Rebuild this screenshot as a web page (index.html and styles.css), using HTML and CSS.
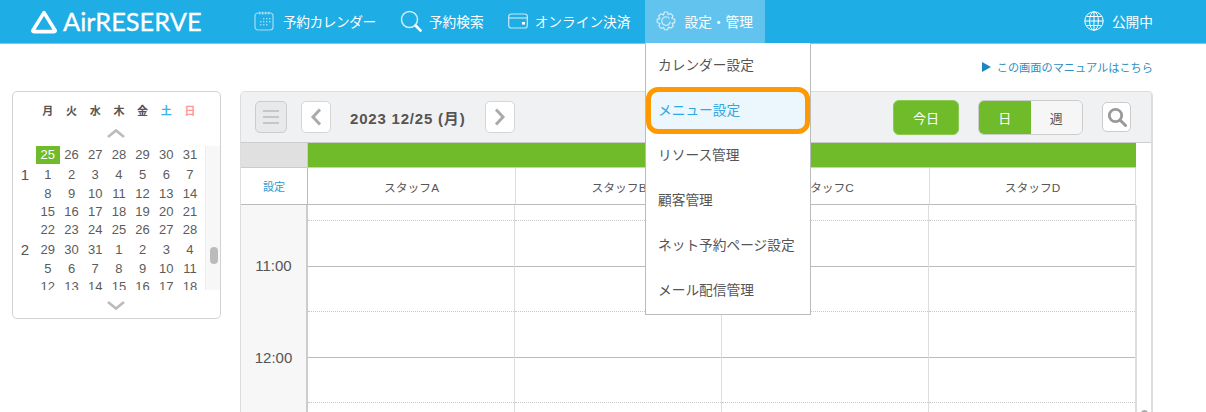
FILE: index.html
```html
<!DOCTYPE html>
<html lang="ja">
<head>
<meta charset="utf-8">
<title>AirRESERVE</title>
<link rel="stylesheet" href="styles.css">
</head>
<body>
<header class="topbar">
  <a class="logo">
    <svg class="logo-mark" viewBox="0 0 26 24" width="26" height="24"><path d="M13 2.6 L24 20.2 Q24.6 21.6 23 21.6 L3 21.6 Q1.4 21.6 2 20.2 Z" fill="none" stroke="#fff" stroke-width="3.6" stroke-linejoin="round"/></svg>
    <span class="logo-text">AirRESERVE</span>
  </a>
  <nav class="nav">
    <a class="nav-item nav-item-first">
      <svg class="nav-icon" viewBox="0 0 20 20" width="20" height="20"><rect x="1" y="2" width="18" height="17" rx="3" fill="none" stroke="#a5dcf4" stroke-width="1.2"/><g fill="#a5dcf4"><rect x="5" y="0.8" width="1.4" height="2.6"/><rect x="8" y="0.8" width="1.4" height="2.6"/><rect x="11" y="0.8" width="1.4" height="2.6"/><rect x="14" y="0.8" width="1.4" height="2.6"/><rect x="9" y="7" width="1.4" height="1.4"/><rect x="12" y="7" width="1.4" height="1.4"/><rect x="15" y="7" width="1.4" height="1.4"/><rect x="6" y="10" width="1.4" height="1.4"/><rect x="9" y="10" width="1.4" height="1.4"/><rect x="12" y="10" width="1.4" height="1.4"/><rect x="15" y="10" width="1.4" height="1.4"/><rect x="6" y="13" width="1.4" height="1.4"/><rect x="9" y="13" width="1.4" height="1.4"/><rect x="12" y="13" width="1.4" height="1.4"/></g></svg>
      <span class="nav-label-narrow">予約カレンダー</span>
    </a>
    <a class="nav-item nav-item-tight">
      <svg class="nav-icon nav-icon-search" viewBox="0 0 22 22" width="22" height="22"><circle cx="9.5" cy="9.5" r="8" fill="none" stroke="#d3eefa" stroke-width="1.5"/><path d="M15.5 15.5 L20.5 20.5" stroke="#fff" stroke-width="2.6" stroke-linecap="round"/></svg>
      <span>予約検索</span>
    </a>
    <a class="nav-item nav-item-pay">
      <svg class="nav-icon" viewBox="0 0 20 16" width="20" height="16"><rect x="0.7" y="1" width="18.6" height="14" rx="2.5" fill="none" stroke="#c6e9f9" stroke-width="1.2"/><path d="M1 5 H19" stroke="#c6e9f9" stroke-width="1.2"/><rect x="14" y="9" width="3" height="2.6" fill="#fff"/></svg>
      <span>オンライン決済</span>
    </a>
    <a class="nav-item nav-item-active">
      <svg class="nav-icon" viewBox="0 0 20 20" width="20" height="20"><path d="M8.4 1 H11.6 L12.2 3.6 L14.6 2.4 L17 4.8 L15.8 7.2 L18.8 8.2 V11.6 L16.2 12.4 L17.4 15 L15 17.2 L12.6 16 L11.6 18.8 H8.4 L7.6 16.2 L5 17.4 L2.8 15 L4 12.6 L1.2 11.6 V8.4 L3.8 7.6 L2.6 5 L5 2.8 L7.4 4 Z" fill="none" stroke="#d8f0fb" stroke-width="1.1" stroke-linejoin="round"/><path d="M13.4 7.4 A4.3 4.3 0 1 0 14.3 10.6" fill="none" stroke="#d8f0fb" stroke-width="1.1"/></svg>
      <span>設定・管理</span>
    </a>
  </nav>
  <a class="status">
    <svg class="nav-icon" viewBox="0 0 20 20" width="20" height="20"><g fill="none" stroke="#fff" stroke-width="1"><circle cx="10" cy="10" r="9.2"/><ellipse cx="10" cy="10" rx="4.4" ry="9.2"/><path d="M10 .8 V19.2 M.8 10 H19.2 M2.2 5.5 H17.8 M2.2 14.5 H17.8"/></g></svg>
    <span>公開中</span>
  </a>
</header>

<div class="manual-row">
  <a class="manual-link"><span class="manual-arrow"></span>この画面のマニュアルはこちら</a>
</div>

<div class="menu">
  <a class="menu-item">カレンダー設定</a>
  <a class="menu-item menu-item-active">メニュー設定</a>
  <a class="menu-item">リソース管理</a>
  <a class="menu-item">顧客管理</a>
  <a class="menu-item">ネット予約ページ設定</a>
  <a class="menu-item">メール配信管理</a>
</div>

<main class="content">
  <aside class="mini-cal">
    <div class="wk-head">
      <span class="wk-label">月</span><span class="wk-label">火</span><span class="wk-label">水</span><span class="wk-label">木</span><span class="wk-label">金</span><span class="wk-label wk-sat">土</span><span class="wk-label wk-sun">日</span>
    </div>
    <div class="cal-arrow cal-arrow-up"><svg viewBox="0 0 20 11" width="20" height="11"><path d="M2 9 L10 2.5 L18 9" fill="none" stroke="#bbb" stroke-width="2.6"/></svg></div>
    <div class="cal-list">
      <div class="weeks">
        <div class="week"><span class="month"></span><span class="day day-sel">25</span><span class="day">26</span><span class="day">27</span><span class="day">28</span><span class="day">29</span><span class="day">30</span><span class="day">31</span></div>
        <div class="week week-gap2"><span class="month">1</span><span class="day">1</span><span class="day">2</span><span class="day">3</span><span class="day">4</span><span class="day">5</span><span class="day">6</span><span class="day">7</span></div>
        <div class="week week-gap1"><span class="month"></span><span class="day">8</span><span class="day">9</span><span class="day">10</span><span class="day">11</span><span class="day">12</span><span class="day">13</span><span class="day">14</span></div>
        <div class="week"><span class="month"></span><span class="day">15</span><span class="day">16</span><span class="day">17</span><span class="day">18</span><span class="day">19</span><span class="day">20</span><span class="day">21</span></div>
        <div class="week"><span class="month"></span><span class="day">22</span><span class="day">23</span><span class="day">24</span><span class="day">25</span><span class="day">26</span><span class="day">27</span><span class="day">28</span></div>
        <div class="week week-gap2"><span class="month">2</span><span class="day">29</span><span class="day">30</span><span class="day">31</span><span class="day">1</span><span class="day">2</span><span class="day">3</span><span class="day">4</span></div>
        <div class="week week-gap1"><span class="month"></span><span class="day">5</span><span class="day">6</span><span class="day">7</span><span class="day">8</span><span class="day">9</span><span class="day">10</span><span class="day">11</span></div>
        <div class="week"><span class="month"></span><span class="day">12</span><span class="day">13</span><span class="day">14</span><span class="day">15</span><span class="day">16</span><span class="day">17</span><span class="day">18</span></div>
      </div>
      <div class="cal-track"><div class="cal-thumb"></div></div>
    </div>
    <div class="cal-arrow cal-arrow-down"><svg viewBox="0 0 20 11" width="20" height="11"><path d="M2 2 L10 8.5 L18 2" fill="none" stroke="#bbb" stroke-width="2.6"/></svg></div>
  </aside>

  <section class="panel">
    <div class="toolbar">
      <button class="btn btn-menu"><svg viewBox="0 0 16 14" width="16" height="14"><path d="M0 1 H16 M0 7 H16 M0 13 H16" stroke="#bbb" stroke-width="1.6"/></svg></button>
      <button class="btn btn-arrow btn-prev"><svg viewBox="0 0 12 18" width="12" height="18"><path d="M10 1.5 L3 9 L10 16.5" fill="none" stroke="#aaa" stroke-width="3"/></svg></button>
      <div class="date-label">2023 12/25 (月)</div>
      <button class="btn btn-arrow btn-next"><svg viewBox="0 0 12 18" width="12" height="18"><path d="M2 1.5 L9 9 L2 16.5" fill="none" stroke="#aaa" stroke-width="3"/></svg></button>
      <button class="btn-today">今日</button>
      <div class="seg">
        <button class="seg-btn seg-on">日</button>
        <button class="seg-btn">週</button>
      </div>
      <button class="btn btn-find"><svg viewBox="0 0 20 20" width="20" height="20"><circle cx="8.5" cy="8.5" r="6.2" fill="none" stroke="#999" stroke-width="2.8"/><path d="M13 13 L18.5 18.5" stroke="#999" stroke-width="3" stroke-linecap="round"/></svg></button>
    </div>

    <div class="band-row">
      <div class="band-gutter"></div>
      <div class="band-green"></div>
    </div>
    <div class="staff-row">
      <a class="staff-setting">設定</a>
      <div class="staff-cell staff-cell-first">スタッフA</div>
      <div class="staff-cell">スタッフB</div>
      <div class="staff-cell">スタッフC</div>
      <div class="staff-cell">スタッフD</div>
    </div>
    <div class="grid-body">
      <div class="times">
        <div class="time">11:00</div>
        <div class="time">12:00</div>
      </div>
      <div class="col">
        <div class="slot slot-first"></div><div class="slot slot-solid"></div><div class="slot"></div><div class="slot slot-solid"></div><div class="slot"></div>
      </div>
      <div class="col">
        <div class="slot slot-first"></div><div class="slot slot-solid"></div><div class="slot"></div><div class="slot slot-solid"></div><div class="slot"></div>
      </div>
      <div class="col">
        <div class="slot slot-first"></div><div class="slot slot-solid"></div><div class="slot"></div><div class="slot slot-solid"></div><div class="slot"></div>
      </div>
      <div class="col col-last">
        <div class="slot slot-first"></div><div class="slot slot-solid"></div><div class="slot"></div><div class="slot slot-solid"></div><div class="slot"></div>
      </div>
    </div>
    <div class="panel-thumb"></div>
  </section>
</main>
</body>
</html>
```

FILE: styles.css
```css
* { box-sizing: border-box; }
html, body { margin: 0; padding: 0; }
body {
  height: 412px;
  overflow: hidden;
  position: relative;
  background: #fff;
  color: #555;
  font-family: "Liberation Sans", "Noto Sans CJK JP", sans-serif;
}
button { font-family: inherit; padding: 0; }

/* top bar */
.topbar {
  display: flex;
  align-items: stretch;
  height: 44px;
  padding-right: 53px;
  background: #1fade5;
  border-bottom: 1px solid #72cbf0;
  color: #fff;
}
.logo {
  display: flex;
  align-items: center;
  gap: 6px;
  width: 242px;
  padding-left: 31px;
}
.logo-mark { flex: none; }
.logo-text {
  font-family: Lato, sans-serif;
  font-size: 25.4px;
  line-height: 1;
  color: #fff;
  -webkit-text-stroke: 0.3px #fff;
}
.nav { display: flex; flex: 1; }
.nav-item {
  display: flex;
  align-items: center;
  gap: 9px;
  padding: 0 12px 2px;
  font-size: 13.7px;
}
.nav-label-narrow { letter-spacing: -0.42px; }
.nav-item-tight { gap: 7px; }
.nav-item-pay { gap: 7px; }
.nav-item-active {
  background: #62c4ee;
  height: 43px;
  margin-left: 3px;
  gap: 8px;
  padding: 0 12px 2px 11px;
}
.nav-icon { flex: none; }
.status {
  display: flex;
  align-items: center;
  gap: 8px;
  padding-bottom: 2px;
  font-size: 13.7px;
}

/* manual link */
.manual-row {
  display: flex;
  justify-content: flex-end;
  align-items: center;
  height: 47px;
  padding: 0 53px 1px 0;
}
.manual-link {
  display: flex;
  align-items: center;
  gap: 6px;
  font-size: 11.2px;
  color: #2d8fc4;
}
.manual-arrow {
  width: 0;
  height: 0;
  border-style: solid;
  border-width: 5px 0 5px 9px;
  border-color: transparent transparent transparent #1c86bf;
}

/* dropdown */
.menu {
  position: absolute;
  left: 645px;
  top: 43px;
  z-index: 5;
  width: 166px;
  height: 272px;
  background: #fff;
  border: 1px solid #bbb;
  border-top: 0;
}
.menu-item {
  display: flex;
  align-items: center;
  position: relative;
  height: 45px;
  padding: 0 0 4px 12px;
  font-size: 13.7px;
  color: #555;
}
.menu-item-active { color: #2fa9e0; isolation: isolate; }
.menu-item-active::before {
  content: "";
  position: absolute;
  inset: -1px 0;
  z-index: -1;
  background: #ebf6fd;
  border: 5px solid #f90;
  border-radius: 12px;
}

/* page content */
.content {
  display: flex;
  align-items: flex-start;
  gap: 19px;
  padding-left: 12px;
}

/* mini calendar */
.mini-cal {
  flex: none;
  width: 209px;
  height: 228px;
  background: #fff;
  border: 1px solid #d2d2d2;
  border-radius: 5px;
  padding-top: 8px;
}
.wk-head {
  display: flex;
  height: 20px;
  padding-left: 23px;
  align-items: center;
}
.wk-label {
  width: 23.7px;
  text-align: center;
  font-size: 11px;
  font-weight: bold;
  color: #555;
}
.wk-sat { color: #3ab4e6; }
.wk-sun { color: #f99; }
.cal-arrow { display: flex; justify-content: center; }
.cal-arrow-up { height: 26px; padding: 8px 2px 0 0; }
.cal-arrow-down { height: 28px; padding: 10px 2px 0 0; }
.cal-list {
  display: flex;
  justify-content: space-between;
  height: 144px;
  overflow: hidden;
}
.weeks { flex: none; width: 192px; }
.week {
  display: flex;
  height: 18px;
  line-height: 18px;
}
.week-gap2 { margin-top: 2px; }
.week-gap1 { margin-top: 1px; }
.month {
  flex: none;
  width: 23px;
  padding-left: 1px;
  text-align: center;
  font-size: 15px;
}
.day {
  flex: none;
  width: 23.7px;
  text-align: center;
  font-size: 13px;
  color: #5c5c5c;
}
.day-sel { background: #6fbb2a; color: #fff; }
.cal-track {
  flex: none;
  width: 15px;
  padding: 101px 3px 0 4px;
  background: #f7f7f7;
  border-left: 1px solid #eee;
}
.cal-thumb {
  width: 8px;
  height: 17px;
  border-radius: 4px;
  background: #bbb;
}

/* main panel */
.panel {
  position: relative;
  flex: none;
  width: 913px;
  height: 340px;
  border: 1px solid #ddd;
  border-right-width: 2px;
  border-bottom: 0;
  border-radius: 5px 5px 0 0;
  background: #fff;
}
.toolbar {
  display: flex;
  align-items: center;
  height: 51px;
  padding: 0 0 0 14px;
  background: #f0f1f2;
  border-bottom: 1px solid #ccc;
  border-radius: 4px 4px 0 0;
}
.btn {
  display: flex;
  align-items: center;
  justify-content: center;
  flex: none;
  background: #fff;
  border: 1px solid #d5d5d5;
  border-radius: 5px;
}
.btn-menu {
  width: 32px;
  height: 32px;
  background: #e8e9ea;
  border-color: #ccc;
  margin-right: 14px;
}
.btn-arrow { width: 30px; height: 32px; }
.btn-prev { margin-right: 19px; }
.date-label {
  flex: none;
  width: 135px;
  font-size: 15px;
  letter-spacing: 0.8px;
  font-weight: bold;
  color: #555;
}
.btn-today {
  width: 66px;
  height: 35px;
  margin-left: 378px;
  border: 1px solid #8cc955;
  border-radius: 6px;
  background: #6fbb2a;
  color: #fff;
  font-size: 13px;
}
.seg {
  display: flex;
  width: 105px;
  height: 35px;
  margin-left: 19px;
  border: 1px solid #ccc;
  border-radius: 6px;
  overflow: hidden;
}
.seg-btn {
  flex: 1;
  border: 0;
  background: #f6f6f6;
  color: #555;
  font-size: 13px;
}
.seg-on { background: #6fbb2a; color: #fff; }
.btn-find {
  width: 29px;
  height: 30px;
  margin-left: 19px;
  border-color: #ccc;
}

.band-row {
  display: flex;
  height: 25px;
}
.band-gutter {
  width: 67px;
  background: #e0e0e0;
  border-bottom: 1px solid #ccc;
  border-right: 1px solid #ccc;
}
.band-green {
  width: 828px;
  background: #6fbb2a;
  border-bottom: 1px solid #ccc;
}
.staff-row {
  display: flex;
  height: 37px;
}
.staff-setting {
  display: flex;
  align-items: center;
  justify-content: center;
  width: 67px;
  font-size: 11px;
  color: #2d9ad0;
  border-right: 1px solid #bbb;
  border-bottom: 1px solid #bbb;
}
.staff-cell {
  display: flex;
  align-items: center;
  justify-content: center;
  width: 207px;
  font-size: 11.8px;
  color: #555;
  border-right: 1px solid #ddd;
  border-bottom: 1px solid #bbb;
}
.staff-cell-first { width: 208px; }
.staff-cell:last-child { width: 206px; }

.grid-body { display: flex; }
.times {
  flex: none;
  width: 67px;
  height: 220px;
  padding-top: 15px;
  background: #f7f7f7;
  border-right: 2px solid #ccc;
}
.time {
  display: flex;
  align-items: center;
  justify-content: center;
  height: 91.5px;
  font-size: 15px;
  color: #555;
}
.col {
  flex: none;
  width: 207px;
  border-right: 1px solid #ddd;
}
.col-last { border-right: 2px solid #ddd; width: 208px; }
.slot {
  height: 45.5px;
  border-bottom: 1px dotted #c8c8c8;
}
.slot-first { height: 16px; }
.slot-solid { border-bottom: 1px solid #bbb; }
.panel-thumb {
  position: absolute;
  left: 900px;
  top: 318px;
  width: 7px;
  height: 10px;
  border-radius: 4px;
  background: #aaa;
}
```
